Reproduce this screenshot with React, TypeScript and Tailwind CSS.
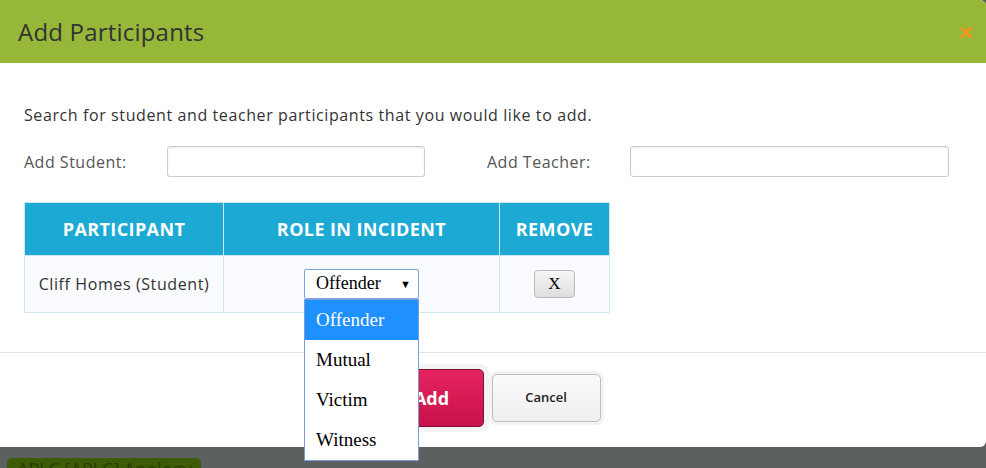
import React from "react";

const roles = ["Offender", "Mutual", "Victim", "Witness"];

export default function App() {
  return (
    <div className="relative h-[468px] w-[986px] overflow-hidden bg-[#5d6061] font-['Open_Sans',sans-serif] text-[#333]">
      {/* dialog */}
      <div className="relative h-[447px] w-full rounded-r-[6px] bg-white">
        <div className="flex h-[63px] items-center justify-between rounded-tr-[6px] bg-[#97b739] pl-[18px] pr-[14px]">
          <h1 className="text-[24px] tracking-[0.2px] text-[#333]">Add Participants</h1>
          <svg width="11" height="11" viewBox="0 0 11 11" className="mt-[2px]">
            <path d="M1.5 1.5 L9.5 9.5 M9.5 1.5 L1.5 9.5" stroke="#f7941d" strokeWidth="3" strokeLinecap="round" />
          </svg>
        </div>

        <div className="px-6 pt-[41px]">
          <p className="text-[16px] leading-[22px] tracking-[0.6px]">
            Search for student and teacher participants that you would like to add.
          </p>

          <div className="mt-[20px] flex items-center text-[16px] tracking-[0.5px] text-[#555]">
            <span className="w-[143px]">Add Student:</span>
            <input className="h-[31px] w-[258px] rounded-[3px] border border-[#ccc] shadow-[inset_0_1px_2px_rgba(0,0,0,0.08)]" />
            <span className="ml-[62px] w-[143px]">Add Teacher:</span>
            <input className="h-[31px] w-[319px] rounded-[3px] border border-[#ccc] shadow-[inset_0_1px_2px_rgba(0,0,0,0.08)]" />
          </div>

          <table className="mt-[25px] w-[586px] border-collapse">
            <thead>
              <tr className="h-[53px] bg-[#1ca9d4] text-[18px] font-bold tracking-[0.4px] text-white">
                <th className="w-[199px] border border-[#cde8f0] font-bold">PARTICIPANT</th>
                <th className="w-[276px] border border-[#cde8f0] font-bold">ROLE IN INCIDENT</th>
                <th className="border border-[#cde8f0] font-bold">REMOVE</th>
              </tr>
            </thead>
            <tbody>
              <tr className="h-[57px] bg-[#f9fbfe] text-[16px]">
                <td className="border border-[#cde8f0] text-center tracking-[0.6px]">Cliff Homes (Student)</td>
                <td className="border border-[#cde8f0]">
                  <div className="relative ml-[80px] w-[115px]">
                    <div className="flex h-[30px] items-center justify-between rounded-[2px] border border-[#7da2e0] bg-white pl-[11px] pr-[7px] font-['Liberation_Serif',serif] text-[18px] text-black">
                      <span className="-mt-[2px]">Offender</span>
                      <span className="text-[11px]">▼</span>
                    </div>
                    <ul className="absolute left-0 top-[30px] z-10 w-[115px] border border-[#7a9bd6] bg-white font-['Liberation_Serif',serif] text-[19px] text-black">
                      {roles.map((r, i) => (
                        <li
                          key={r}
                          className={
                            i === 0
                              ? "flex h-[40px] items-center bg-[#1e90ff] pl-[11px] text-white"
                              : "flex h-[40px] items-center pl-[11px]"
                          }
                        >
                          {r}
                        </li>
                      ))}
                    </ul>
                  </div>
                </td>
                <td className="border border-[#cde8f0] text-center">
                  <button className="h-[28px] w-[41px] rounded-[4px] border border-[#bbb] bg-gradient-to-b from-[#f6f6f6] to-[#dedede] font-['Liberation_Serif',serif] text-[17px] text-black">
                    X
                  </button>
                </td>
              </tr>
            </tbody>
          </table>
        </div>

        <div className="mt-[39px] border-t border-[#e3e3e3]" />

        <div className="flex items-center justify-center pr-[8px] pt-[11px]">
          <div className="rounded-[8px] bg-[#f3f3f3] p-[5px]">
            <button className="h-[58px] w-[104px] rounded-[5px] border border-[#7a1030] bg-gradient-to-b from-[#e6245f] to-[#c8114a] text-[18px] font-bold text-white">
              Add
            </button>
          </div>
          <div className="rounded-[8px] bg-[#f3f3f3] p-[3px]">
            <button className="h-[48px] w-[109px] rounded-[5px] border border-[#bdbdbd] bg-gradient-to-b from-[#fafafa] to-[#efefef] text-[13px] font-semibold text-[#222]">
              Cancel
            </button>
          </div>
        </div>
      </div>

      <div className="ml-[7px] mt-[11px] inline-block rounded-t-[5px] bg-[#3d5c06] px-[10px] text-[18px] leading-[22px] text-[#2a3d05]">
        APLC [APLC] Apology
      </div>
    </div>
  );
}
